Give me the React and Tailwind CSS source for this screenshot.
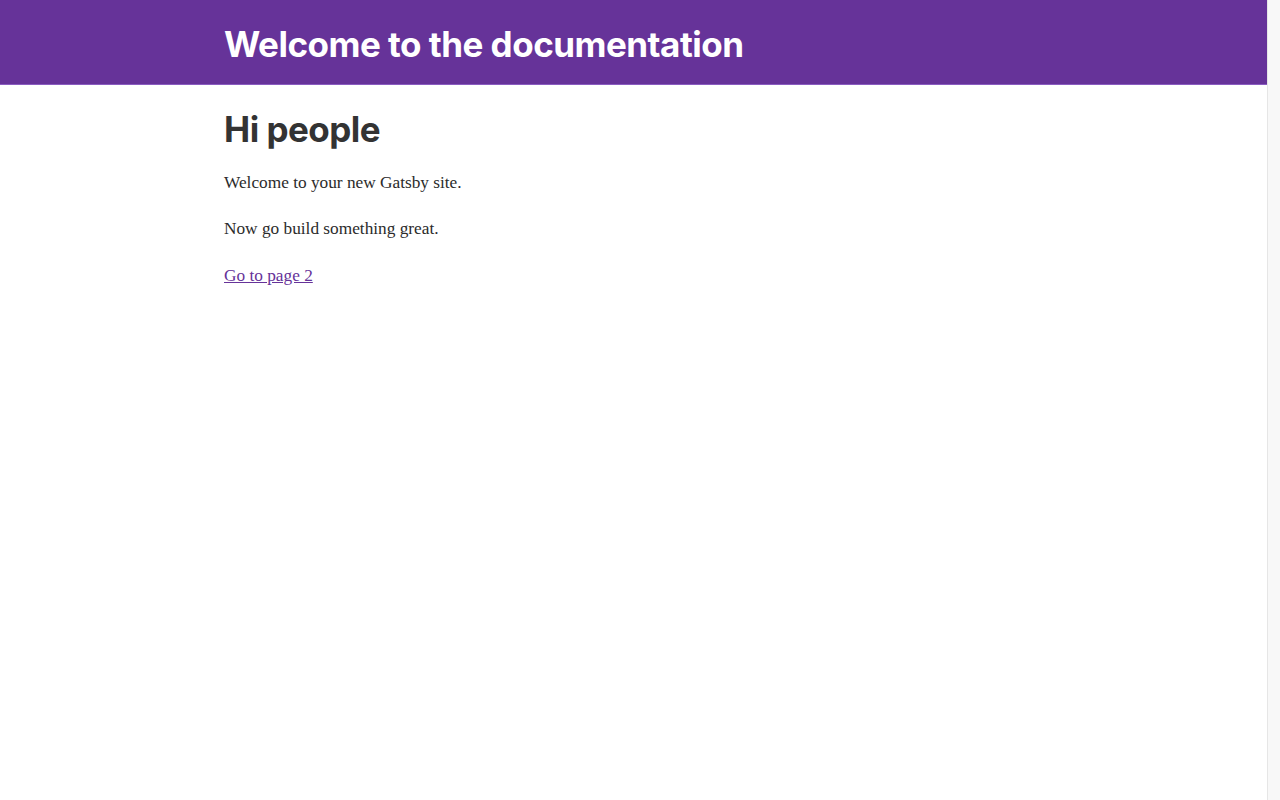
export default function App() {
  return (
    <div className="flex min-h-[800px] bg-white">
      <div className="flex-1">
        {/* Header */}
        <header className="h-[85px] bg-[#663399] border-b border-[#8a5cc0] flex items-center pl-[224px] pt-[4px]">
          <h1 className="text-[35px] leading-none font-bold text-white tracking-[-0.5px] font-['Inter',sans-serif]">
            Welcome to the documentation
          </h1>
        </header>

        {/* Content */}
        <main className="pl-[224px] pt-[24px]">
          <h2 className="text-[35px] leading-[40px] font-bold text-[#333] tracking-[-0.5px] font-['Inter',sans-serif]">
            Hi people
          </h2>
          <div className="mt-[22px] text-[17.3px] leading-[24px] text-[#2b2b2b] font-['Liberation_Serif','DejaVu_Serif',serif] space-y-[22px]">
            <p>Welcome to your new Gatsby site.</p>
            <p>Now go build something great.</p>
            <p className="pt-[1px]">
              <a href="#" className="text-[#663399] underline">Go to page 2</a>
            </p>
          </div>
        </main>
      </div>

      {/* Scrollbar track */}
      <div className="w-[13px] bg-[#f8f8f8] border-l border-[#e6e6e6]" />
    </div>
  );
}
